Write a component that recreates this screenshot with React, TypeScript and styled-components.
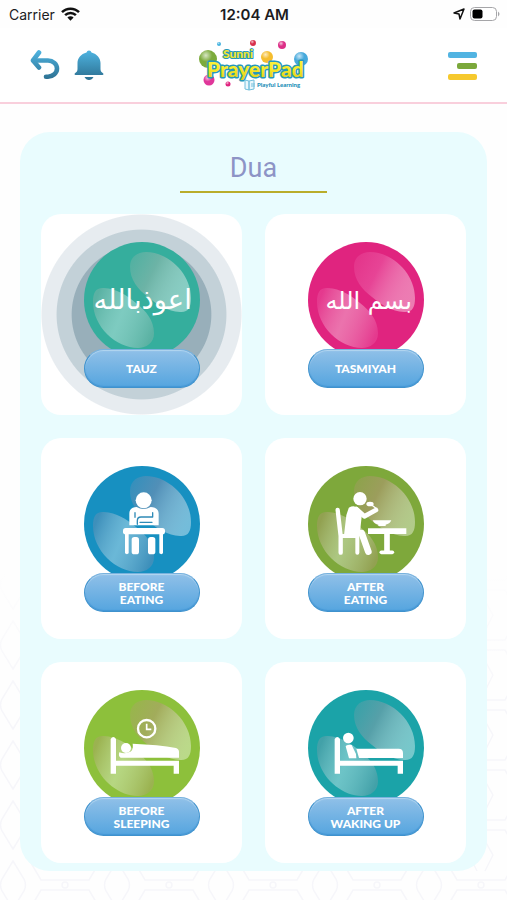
import React from "react";
import styled, { createGlobalStyle } from "styled-components";

const GlobalStyle = createGlobalStyle`
  *, *::before, *::after { box-sizing: border-box; }
  body { margin: 0; background: #fefefe; font-family: Inter, "Liberation Sans", sans-serif; }
  button { border: 0; padding: 0; background: none; font: inherit; cursor: pointer; }
`;

const Page = styled.div`
  position: relative;
  min-height: 100vh;
  display: flex;
  flex-direction: column;
  isolation: isolate;
`;

const Backdrop = styled.svg`
  position: absolute;
  inset: auto 0 0 0;
  width: 100%;
  height: 330px;
  z-index: -1;
`;

const StatusBar = styled.div`
  display: grid;
  grid-template-columns: 1fr auto 1fr;
  align-items: center;
  height: 28px;
  padding: 0 7px 0 9px;
  font-size: 14px;
  color: #1c1c1e;
`;

const Carrier = styled.div`
  display: flex;
  align-items: center;
  gap: 6px;
`;

const Clock = styled.time`
  font-size: 15px;
  font-weight: 600;
`;

const Indicators = styled.div`
  display: flex;
  align-items: center;
  justify-content: flex-end;
  gap: 5px;
`;

const Header = styled.header`
  display: grid;
  grid-template-columns: 1fr auto 1fr;
  align-items: center;
  height: 76px;
  padding: 0 30px;
  background: #fff;
  border-bottom: 2px solid #f9cfdc;
`;

const HeaderActions = styled.div`
  display: flex;
  gap: 14px;
`;

const IconButton = styled.button`
  display: flex;
  justify-self: start;
`;

const MenuButton = styled(IconButton)`
  justify-self: end;
`;

const Logo = styled.a`
  display: flex;
`;

const Panel = styled.main`
  margin: 28px 20px 29px;
  padding: 17px 21px 8px;
  border-radius: 30px;
  background: #e9fcfe;
`;

const Title = styled.h1`
  width: 147px;
  margin: 0 auto 21px;
  padding-bottom: 4px;
  border-bottom: 2px solid #b9ad2b;
  font: 400 27px/38px Roboto, "Liberation Sans", sans-serif;
  text-align: center;
  color: #8d94c6;
`;

const Grid = styled.div`
  display: grid;
  grid-template-columns: 1fr 1fr;
  gap: 23px;
`;

const Card = styled.button<{ $pressed?: boolean }>`
  display: flex;
  flex-direction: column;
  align-items: center;
  padding: 28px 0 27px;
  border-radius: 20px;
  background: ${(p) =>
    p.$pressed
      ? "radial-gradient(circle closest-side, #98afba 69%, #c3d1d8 70% 84%, #e7ecf0 85% 99%, #fff 100%)"
      : "#fff"};
`;

const OrbArt = styled.svg`
  display: block;
  width: 116px;
  height: 116px;
`;

const Label = styled.span`
  display: flex;
  align-items: center;
  justify-content: center;
  position: relative;
  width: 116px;
  height: 39px;
  margin-top: -9px;
  border: 1px solid #3f92cd;
  border-top-color: #78b2de;
  border-radius: 20px;
  background: linear-gradient(#90c0e8, #55a5df);
  box-shadow: inset 0 1px 1px #b4d6f0, inset 0 -1px 1px #4497d6;
  font: 900 12px/13px Lato, "Liberation Sans", sans-serif;
  color: #fff;
  white-space: pre-line;
`;

const ArabicText = styled.text`
  font-family: "DejaVu Sans", sans-serif;
  fill: #fff;
  text-anchor: middle;
`;

const WordMark = styled.text`
  font-family: Lato, sans-serif;
  font-weight: 900;
  stroke-linejoin: round;
  paint-order: stroke;
`;

/* Pictograms are drawn on a 348-unit square, three units to a pixel. */
const DeskIcon = () => (
  <g fill="#fff" stroke="none">
    <circle cx="179" cy="103" r="24" />
    <path d="M136 178v-35c0-14 9-20 22-20q20 12 42 0c13 0 24 6 24 20v35z" />
    <rect x="117" y="186" width="126" height="19" rx="8" />
    <path d="M123 200h11v62q-5 5-11 0zM226 200h11v62q-5 5-11 0z" />
    <rect x="143" y="213" width="22" height="52" rx="8" />
    <rect x="192" y="213" width="22" height="52" rx="8" />
    <path
      d="M153 140v14M206 140v13h-35q-11 0-11 11v11M168 169h36"
      fill="none"
      stroke="#2f8bb7"
      strokeWidth="4"
      strokeLinecap="round"
      strokeLinejoin="round"
    />
  </g>
);

const DiningIcon = () => (
  <g fill="#fff" stroke="#fff" strokeLinecap="round" strokeLinejoin="round">
    <circle cx="156" cy="98" r="20" stroke="none" />
    <path d="M89 132l9 78v50" fill="none" strokeWidth="13" />
    <path d="M100 210h48v50" fill="none" strokeWidth="12" />
    <path d="M125 127q14-8 27 4l7 13-3 26-2 20-43 18 7-60z" strokeWidth="6" />
    <path d="M145 129l24 22 35-19" fill="none" strokeWidth="14" />
    <path d="M124 201h37l20 56" fill="none" strokeWidth="20" />
    <ellipse cx="186" cy="114" rx="11" ry="7" stroke="none" />
    <path d="M190 116l13 10" strokeWidth="4" />
    <path d="M194 163h56q-5 11-17 13v4h-22v-4q-12-2-17-13z" stroke="none" />
    <path d="M180 187h115v17H180z" stroke="none" />
    <path d="M237 204v54" strokeWidth="17" strokeLinecap="butt" />
    <path d="M220 259h33" strokeWidth="11" />
  </g>
);

const BedFrame = () => (
  <path d="M80 147q8-12 16 0v65h189v39h-16v-24H96v24H80z" />
);

const SleepIcon = () => (
  <g fill="#fff">
    <BedFrame />
    <circle cx="126" cy="174" r="15" />
    <path d="M106 187q16 6 28 0c10-3 14-10 12-26q78 3 130 13 10 3 9 14v15H110q-8-4-4-16z" />
    <g fill="none" stroke="#fff">
      <circle cx="188" cy="116" r="26" strokeWidth="7" />
      <path d="M188 101v17h14" strokeWidth="5" />
    </g>
  </g>
);

const WakeIcon = () => (
  <g fill="#fff">
    <BedFrame />
    <circle cx="121" cy="144" r="16" />
    <path d="M113 169q2-6 18-4l13 27 1 13h-22z" />
    <path d="M145 176h127q13 0 13 13v15H153z" />
  </g>
);

const TauzScript = () => (
  <ArabicText x="176" y="202" fontSize="82" direction="rtl">
    اعوذبالله
  </ArabicText>
);

const TasmiyahScript = () => (
  <ArabicText x="182" y="202" fontSize="72" direction="rtl">
    بسم الله
  </ArabicText>
);

type OrbProps = { id: string; color: string; tint: string; children: React.ReactNode };

const Orb = ({ id, color, tint, children }: OrbProps) => (
  <OrbArt viewBox="0 0 348 348" aria-hidden="true">
    <defs>
      <linearGradient id={`${id}-top`} x1="0" y1="0.2" x2="1" y2="0.7">
        <stop offset="0" stopColor={tint} stopOpacity="0.4" />
        <stop offset="0.35" stopColor={tint} stopOpacity="0.75" />
        <stop offset="1" stopColor="#fff" stopOpacity="0.4" />
      </linearGradient>
      <linearGradient id={`${id}-bottom`} x1="0" y1="0.3" x2="1" y2="0.7">
        <stop offset="0" stopColor={tint} stopOpacity="0.5" />
        <stop offset="0.45" stopColor="#fff" stopOpacity="0.36" />
        <stop offset="1" stopColor={tint} stopOpacity="0.5" />
      </linearGradient>
    </defs>
    <circle cx="174" cy="174" r="174" fill={color} />
    <path
      d="M138 74C138 44 162 30 186 30c66 0 135 64 135 138 0 28-8 44-33 42-38-3-66-20-96-45-30-23-54-52-54-91z"
      fill={`url(#${id}-top)`}
    />
    <path
      d="M210 274c0 30-24 44-48 44C96 318 27 254 27 180c0-28 8-44 33-42 38 3 66 20 96 45 30 23 54 52 54 91z"
      fill={`url(#${id}-bottom)`}
    />
    {children}
  </OrbArt>
);

const duas = [
  { id: "tauz", label: "TAUZ", color: "#35ae9d", tint: "#7fb5a9", art: <TauzScript />, pressed: true },
  { id: "tasmiyah", label: "TASMIYAH", color: "#e0247f", tint: "#e94f9d", art: <TasmiyahScript /> },
  { id: "before-eating", label: "BEFORE\nEATING", color: "#1790c1", tint: "#658fb4", art: <DeskIcon /> },
  { id: "after-eating", label: "AFTER\nEATING", color: "#7ea83b", tint: "#a69a67", art: <DiningIcon /> },
  { id: "before-sleeping", label: "BEFORE\nSLEEPING", color: "#8dc03b", tint: "#a9a566", art: <SleepIcon /> },
  { id: "after-waking", label: "AFTER\nWAKING UP", color: "#1ba3a8", tint: "#6a9fa9", art: <WakeIcon /> },
];

const LatticeBackdrop = () => (
  <Backdrop aria-hidden="true">
    <defs>
      <pattern id="lattice" x="-39" y="-15" width="104" height="60" patternUnits="userSpaceOnUse">
        <g fill="none" stroke="#f6f6fa" strokeWidth="1.5">
          <path d="M52 6l11 18q3 6 0 12L52 54 41 36q-3-6 0-12z" />
          <path d="M0 25h24l10-17M0 35h24l10 17M104 25H80L70 8M104 35H80L70 52" />
          <path d="M12 0L4 16M92 0l8 16M12 60L4 46M92 60l8-14" />
          <circle cx="0" cy="30" r="3" />
          <circle cx="104" cy="30" r="3" />
        </g>
      </pattern>
      <linearGradient id="fade" x1="0" y1="0" x2="0" y2="1">
        <stop offset="0" stopColor="#fefefe" />
        <stop offset="0.4" stopColor="#fefefe" stopOpacity="0" />
      </linearGradient>
    </defs>
    <rect width="100%" height="100%" fill="url(#lattice)" />
    <rect width="100%" height="100%" fill="url(#fade)" />
  </Backdrop>
);

const LogoArt = () => (
  <svg width="112" height="52" viewBox="0 0 112 52" role="img" aria-label="Sunni PrayerPad, Playful Learning">
    <defs>
      <linearGradient id="gold" x1="0" y1="0" x2="0" y2="1">
        <stop offset="0" stopColor="#fff84a" />
        <stop offset="0.5" stopColor="#f8ea2a" />
        <stop offset="1" stopColor="#dcca1c" />
      </linearGradient>
      <radialGradient id="shine" cx="0.38" cy="0.3" r="0.7">
        <stop offset="0" stopColor="#fff" stopOpacity="0.7" />
        <stop offset="0.5" stopColor="#fff" stopOpacity="0" />
      </radialGradient>
    </defs>
    {[
      [10, 20, 9, "#7cab3c"],
      [11, 41, 5.5, "#e0379a"],
      [30, 45, 2.5, "#e0247f"],
      [21, 5, 2, "#46b3e0"],
      [55, 4, 3, "#d8304c"],
      [84, 6, 4, "#dc2f87"],
      [69, 18, 6, "#f5bd2e"],
      [103, 20, 7, "#46a9dc"],
    ].map(([cx, cy, r, fill], i) => (
      <g key={i}>
        <circle cx={cx} cy={cy} r={r} fill={String(fill)} />
        <circle cx={cx} cy={cy} r={r} fill="url(#shine)" />
      </g>
    ))}
    <WordMark x="25" y="19" fontSize="12" fill="#f3e62e" stroke="#2798b8" strokeWidth="2">
      Sunni
    </WordMark>
    <WordMark x="9" y="38" fontSize="21" fill="url(#gold)" stroke="#2798b8" strokeWidth="3">
      PrayerPad
    </WordMark>
    <g fill="#eaf7fc" stroke="#72bfdc" strokeWidth="1">
      <path d="M47 41l4 1v9l-4-1zM51 42l5-1v9l-5 1z" />
      <path d="M53 45h4M53 47h4" />
    </g>
    <WordMark x="59" y="48" fontSize="6" fill="#1d8fb8">
      Playful Learning
    </WordMark>
  </svg>
);

export default function App() {
  return (
    <Page>
      <GlobalStyle />
      <LatticeBackdrop />
      <StatusBar>
        <Carrier>
          Carrier
          <svg width="19" height="14" viewBox="0 0 19 14" aria-hidden="true">
            <g fill="none" stroke="#111" strokeWidth="2.5">
              <path d="M1 5.2a12 12 0 0 1 17 0" />
              <path d="M4.1 8.2a7.7 7.7 0 0 1 10.8 0" />
            </g>
            <path d="M9.5 13.8L6.4 10.6a4.4 4.4 0 0 1 6.2 0z" fill="#111" />
          </svg>
        </Carrier>
        <Clock>12:04 AM</Clock>
        <Indicators>
          <svg width="12" height="12" viewBox="0 0 12 12" aria-hidden="true">
            <path d="M11 1L7 11 6 6 1 5z" fill="none" stroke="#111" strokeWidth="1.5" strokeLinejoin="round" />
          </svg>
          <svg width="30" height="14" viewBox="0 0 30 14" aria-hidden="true">
            <rect x="0.5" y="0.5" width="26" height="13" rx="4" fill="#fff" stroke="#a5a5a8" />
            <rect x="2.5" y="2.5" width="10" height="9" rx="2" fill="#000" />
            <path d="M28 4.5q3 2.5 0 5z" fill="#a5a5a8" />
          </svg>
        </Indicators>
      </StatusBar>
      <Header>
        <HeaderActions>
          <IconButton aria-label="Back">
            <svg width="30" height="30" viewBox="0 0 30 30" aria-hidden="true">
              <defs>
                <linearGradient id="blue" gradientUnits="userSpaceOnUse" x1="0" y1="0" x2="0" y2="30">
                  <stop offset="0" stopColor="#4fb5e2" />
                  <stop offset="1" stopColor="#2c6f90" />
                </linearGradient>
              </defs>
              <g fill="none" stroke="url(#blue)" strokeWidth="4.6" strokeLinecap="round" strokeLinejoin="round">
                <path d="M9 2.5L3 10.5l6 7" />
                <path d="M3.5 10.5H18a9 8.1 0 0 1 0 16.2h-2" />
              </g>
            </svg>
          </IconButton>
          <IconButton aria-label="Notifications">
            <svg width="30" height="30" viewBox="0 0 30 30" aria-hidden="true">
              <g fill="url(#blue)">
                <path d="M12.5 2.5a2.6 2.6 0 0 1 5 0C23 4 26.500 8 26.500 13v6c0 2 .7 3 2.500 4.200.8.700.5 1.800-.6 1.800H1.600C.5 25 .2 23.900 1 23.200 2.800 22 3.500 21 3.500 19v-6C3.500 8 7 4 12.500 2.500z" />
                <path d="M10.5 27h9q-1.500 3-4.500 3t-4.500-3z" />
              </g>
            </svg>
          </IconButton>
        </HeaderActions>
        <Logo href="#home">
          <LogoArt />
        </Logo>
        <MenuButton aria-label="Menu">
          <svg width="29" height="29" viewBox="0 0 29 29" aria-hidden="true">
            <rect width="29" height="6" y="1" rx="2" fill="#52b4e2" />
            <rect x="9" y="12" width="20" height="6" rx="2" fill="#7ba83b" />
            <rect y="23" width="29" height="6" rx="2" fill="#f6c92d" />
          </svg>
        </MenuButton>
      </Header>
      <Panel>
        <Title>Dua</Title>
        <Grid>
          {duas.map((dua) => (
            <Card key={dua.id} $pressed={dua.pressed}>
              <Orb id={dua.id} color={dua.color} tint={dua.tint}>
                {dua.art}
              </Orb>
              <Label>{dua.label}</Label>
            </Card>
          ))}
        </Grid>
      </Panel>
    </Page>
  );
}
